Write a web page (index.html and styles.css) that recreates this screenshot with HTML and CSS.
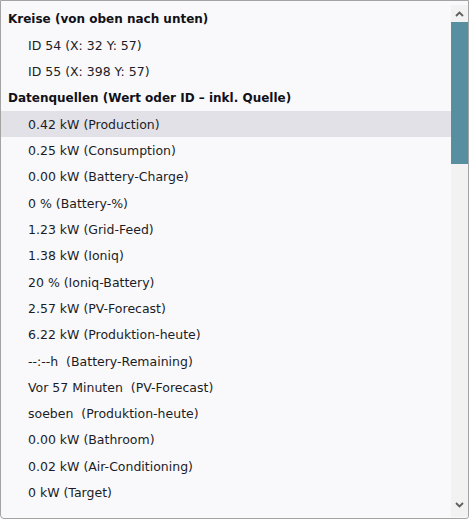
FILE: index.html
```html
<!DOCTYPE html>
<html lang="de">
<head>
<meta charset="utf-8">
<title>Auswahl</title>
<link rel="stylesheet" href="styles.css">
</head>
<body>
<div class="panel">
  <div class="list">
    <div class="row header">Kreise (von oben nach unten)</div>
    <div class="row item">ID 54 (X: 32 Y: 57)</div>
    <div class="row item">ID 55 (X: 398 Y: 57)</div>
    <div class="row header">Datenquellen (Wert oder ID – inkl. Quelle)</div>
    <div class="row item active">0.42 kW (Production)</div>
    <div class="row item">0.25 kW (Consumption)</div>
    <div class="row item">0.00 kW (Battery-Charge)</div>
    <div class="row item">0 % (Battery-%)</div>
    <div class="row item">1.23 kW (Grid-Feed)</div>
    <div class="row item">1.38 kW (Ioniq)</div>
    <div class="row item">20 % (Ioniq-Battery)</div>
    <div class="row item">2.57 kW (PV-Forecast)</div>
    <div class="row item">6.22 kW (Produktion-heute)</div>
    <div class="row item">--:--h&nbsp; (Battery-Remaining)</div>
    <div class="row item">Vor 57 Minuten&nbsp; (PV-Forecast)</div>
    <div class="row item">soeben&nbsp; (Produktion-heute)</div>
    <div class="row item">0.00 kW (Bathroom)</div>
    <div class="row item">0.02 kW (Air-Conditioning)</div>
    <div class="row item">0 kW (Target)</div>
  </div>
  <div class="scrollbar">
    <div class="sb-btn">
      <svg width="9" height="6" viewBox="0 0 9 6"><path d="M1 5 L4.5 1.5 L8 5" fill="none" stroke="#5f5f5f" stroke-width="1.8"/></svg>
    </div>
    <div class="sb-thumb"></div>
    <div class="sb-track"></div>
    <div class="sb-btn">
      <svg width="9" height="6" viewBox="0 0 9 6"><path d="M1 1 L4.5 4.5 L8 1" fill="none" stroke="#5f5f5f" stroke-width="1.8"/></svg>
    </div>
  </div>
</div>
</body>
</html>
```
FILE: styles.css
```css
html, body {
  margin: 0;
  padding: 0;
  background: #ffffff;
}

.panel {
  box-sizing: border-box;
  width: 469px;
  height: 519px;
  display: flex;
  flex-direction: row;
  align-items: flex-start;
  background: #f9f9fb;
  border: 1px solid #a3a3a3;
  border-radius: 0 0 3px 4px;
  font-family: "DejaVu Sans", sans-serif;
  font-size: 12.5px;
  color: #1c1c26;
}

.list {
  flex: 1;
  height: 512px;
  overflow: hidden;
  box-sizing: border-box;
  padding-top: 5px;
}

.row {
  height: 26.3px;
  display: flex;
  align-items: center;
  white-space: nowrap;
}

.header {
  font-weight: bold;
  font-size: 12px;
  padding-left: 7px;
  color: #111118;
}

.item {
  padding-left: 27px;
}

.active {
  background: #e2e1e7;
}

.scrollbar {
  width: 17px;
  height: 512px;
  margin-top: 4px;
  background: #f2f2f3;
  display: flex;
  flex-direction: column;
  padding-bottom: 4px;
  box-sizing: border-box;
}

.sb-btn {
  height: 17px;
  display: flex;
  align-items: center;
  justify-content: center;
  flex: none;
}

.sb-thumb {
  height: 142px;
  background: #578fa1;
  flex: none;
}

.sb-track {
  flex: 1;
}
```
